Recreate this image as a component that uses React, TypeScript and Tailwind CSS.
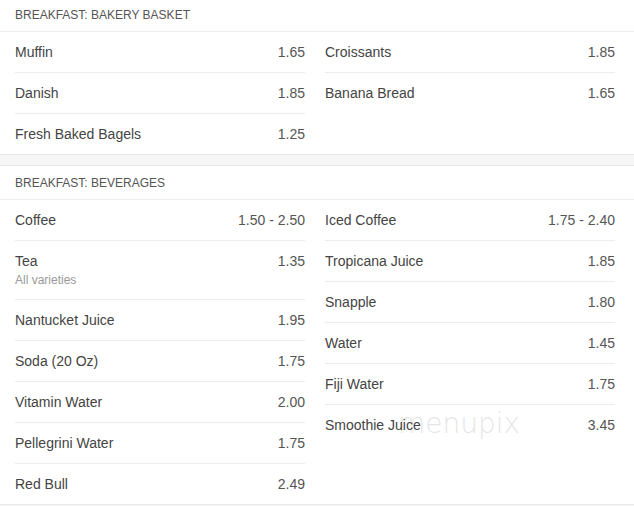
import React from "react";

type Item = { name: string; price: string; note?: string };

const Row = ({ item, first }: { item: Item; first: boolean }) => (
  <div className={`flex justify-between py-[10px] ${first ? "" : "border-t border-[#ececec]"}`}>
    <div className="flex flex-col">
      <span className="text-[14px] leading-[20px] text-[#444]">{item.name}</span>
      {item.note && <span className="text-[12px] leading-[18px] text-[#999]">{item.note}</span>}
    </div>
    <span className="text-[14px] leading-[20px] text-[#555]">{item.price}</span>
  </div>
);

const Col = ({ items }: { items: Item[] }) => (
  <div className="flex flex-col">
    {items.map((it, i) => (
      <Row key={it.name} item={it} first={i === 0} />
    ))}
  </div>
);

const Section = ({ title, left, right, className = "" }: { title: string; left: Item[]; right: Item[]; className?: string }) => (
  <div className={className}>
    <div className="h-[34px] flex items-center pl-[15px] border-b border-[#ececec] text-[12px] text-[#555] uppercase">
      {title}
    </div>
    <div className="grid grid-cols-[290px_290px] gap-x-[20px] pl-[15px]">
      <Col items={left} />
      <Col items={right} />
    </div>
  </div>
);

export default function App() {
  return (
    <div className="relative w-[634px] h-[506px] overflow-hidden bg-white font-['Liberation_Sans',Arial,sans-serif]">
      <Section
        className="-mt-[2px]"
        title="Breakfast: Bakery Basket"
        left={[
          { name: "Muffin", price: "1.65" },
          { name: "Danish", price: "1.85" },
          { name: "Fresh Baked Bagels", price: "1.25" },
        ]}
        right={[
          { name: "Croissants", price: "1.85" },
          { name: "Banana Bread", price: "1.65" },
        ]}
      />
      <div className="h-[12px] bg-[#f6f6f6] border-y border-[#e8e8e8]" />
      <Section
        title="Breakfast: Beverages"
        left={[
          { name: "Coffee", price: "1.50 - 2.50" },
          { name: "Tea", price: "1.35", note: "All varieties" },
          { name: "Nantucket Juice", price: "1.95" },
          { name: "Soda (20 Oz)", price: "1.75" },
          { name: "Vitamin Water", price: "2.00" },
          { name: "Pellegrini Water", price: "1.75" },
          { name: "Red Bull", price: "2.49" },
        ]}
        right={[
          { name: "Iced Coffee", price: "1.75 - 2.40" },
          { name: "Tropicana Juice", price: "1.85" },
          { name: "Snapple", price: "1.80" },
          { name: "Water", price: "1.45" },
          { name: "Fiji Water", price: "1.75" },
          { name: "Smoothie Juice", price: "3.45" },
        ]}
      />
      <div className="h-[12px] bg-[#f6f6f6] border-t border-[#e8e8e8]" />
      <div className="pointer-events-none absolute left-[398px] top-[408px] text-[28px] leading-[32px] text-[#000] opacity-[0.1] font-['DejaVu_Sans',sans-serif] font-extralight">
        menupix
      </div>
    </div>
  );
}
